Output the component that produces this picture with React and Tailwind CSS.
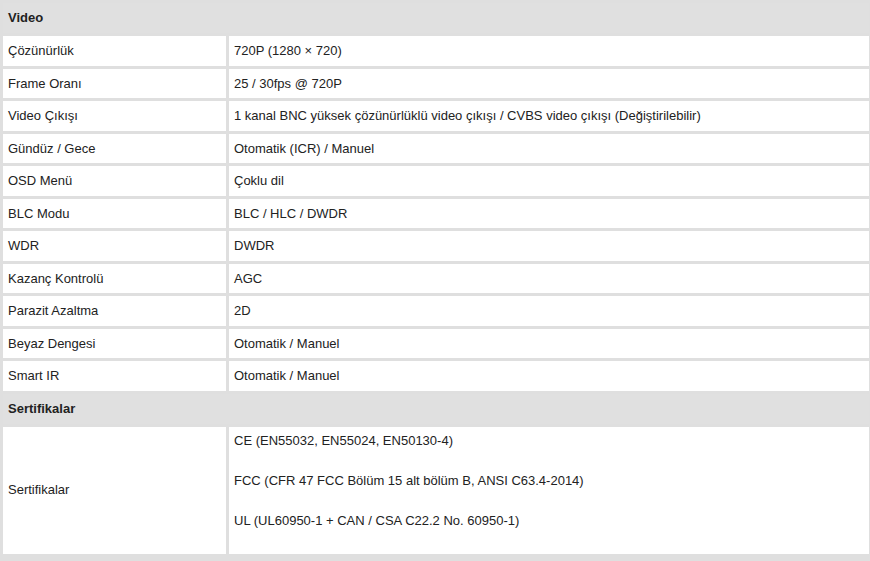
const specs = [
    ["Çözünürlük", "720P (1280 × 720)"],
    ["Frame Oranı", "25 / 30fps @ 720P"],
    ["Video Çıkışı", "1 kanal BNC yüksek çözünürlüklü video çıkışı / CVBS video çıkışı (Değiştirilebilir)"],
    ["Gündüz / Gece", "Otomatik (ICR) / Manuel"],
    ["OSD Menü", "Çoklu dil"],
    ["BLC Modu", "BLC / HLC / DWDR"],
    ["WDR", "DWDR"],
    ["Kazanç Kontrolü", "AGC"],
    ["Parazit Azaltma", "2D"],
    ["Beyaz Dengesi", "Otomatik / Manuel"],
    ["Smart IR", "Otomatik / Manuel"],
];

const certs = [
    "CE (EN55032, EN55024, EN50130-4)",
    "FCC (CFR 47 FCC Bölüm 15 alt bölüm B, ANSI C63.4-2014)",
    "UL (UL60950-1 + CAN / CSA C22.2 No. 60950-1)",
];

const SectionHeader = ({ title }) => (
    <div className="col-span-2 h-[30px] flex items-center pl-[5px] font-bold bg-[#e0e0e0]">
        {title}
    </div>
);

const App = () => {
    return (
        <div
            className="min-h-[561px] w-[870px] bg-[#dfdfdf] pt-[3px] pl-[3px] pr-[1px] text-[13px] text-[#222]"
            style={{ fontFamily: '"Liberation Sans", Arial, sans-serif' }}
        >
            <div className="grid grid-cols-[223px_1fr] gap-[3px]">
                <SectionHeader title="Video" />

                {specs.map(([label, value]) => (
                    <div key={label} className="contents">
                        <div className="h-[29.5px] flex items-center pl-[5px] bg-white">{label}</div>
                        <div className="h-[29.5px] flex items-center pl-[5px] bg-white">{value}</div>
                    </div>
                ))}

                <SectionHeader title="Sertifikalar" />

                <div className="h-[127px] flex items-center pl-[5px] bg-white">Sertifikalar</div>
                <div className="h-[127px] flex flex-col gap-[25px] pt-[6px] pl-[5px] bg-white leading-[15px]">
                    {certs.map(line => <p key={line}>{line}</p>)}
                </div>
            </div>
        </div>
    );
}

export default App
